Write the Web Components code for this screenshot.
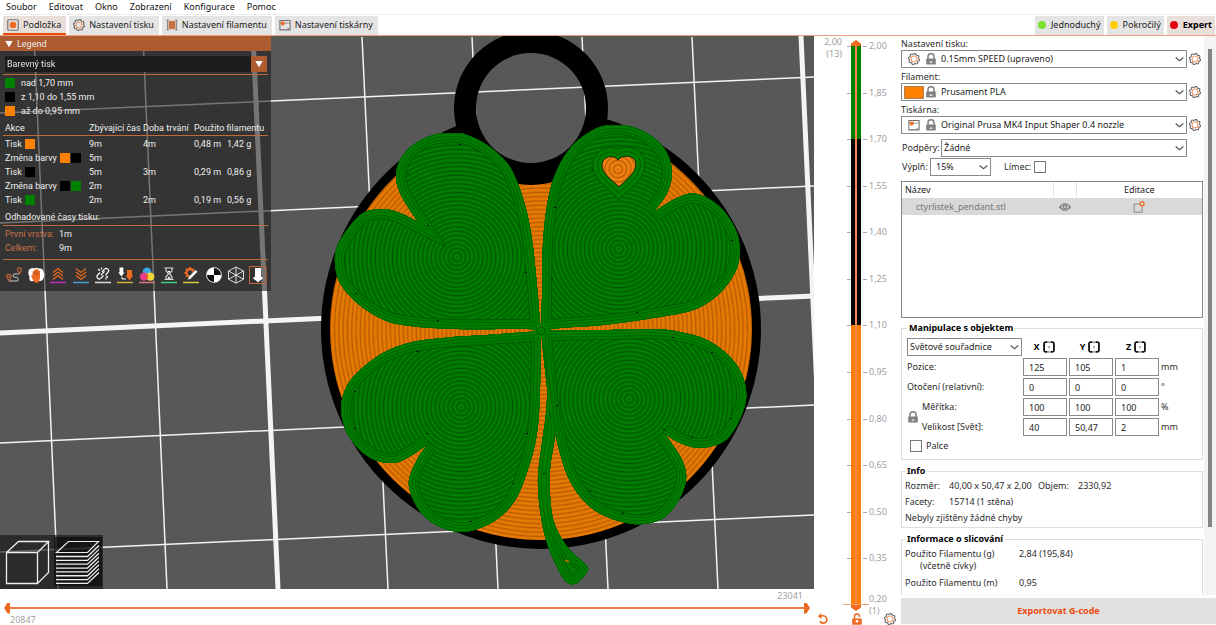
<!DOCTYPE html>
<html lang="cs">
<head>
<meta charset="utf-8">
<title>PrusaSlicer</title>
<style>
html, body { margin: 0; height: 100%; overflow: hidden; background: #fff; }
body { font-family: "Noto Sans", "Open Sans", sans-serif; font-size: 9px; line-height: 14px; color: #2b2b2b; }
</style>
</head>
<body>
<slicer-app></slicer-app>
<script>
const GEAR = (() => {
  let p = '';
  for (let i = 0; i < 32; i++) {
    const r = (i >> 1) % 2 ? 6.3 : 7.5, a = (i + .5) * Math.PI / 16;
    p += (i ? 'L' : 'M') + (8 + r * Math.cos(a)).toFixed(2) + ' ' + (8 + r * Math.sin(a)).toFixed(2);
  }
  return p + 'Z';
})();
const base = (color, body) => body + `<path d="M1 16.5H17" stroke="${color}" stroke-width="1.5"/>`;
const ICONS = {
  bed: [16, '<rect x="1" y="1" width="14" height="14" rx="1.5" fill="none" stroke="#777" stroke-width="1.6"/><circle cx="8" cy="8" r="4.4" fill="#ed6b21"/>'],
  gear: [16, `<path d="${GEAR}" fill="none" stroke="#6c6c6c" stroke-width="1.5"/><circle cx="8" cy="8" r="4" fill="none" stroke="#f09a6c" stroke-width="1.5"/>`],
  spool: [16, '<path d="M3.5 2.5h9v11h-9z" fill="#cf7647"/><path d="M4 5h8M4 8h8M4 11h8" stroke="#a86846" stroke-width=".8"/><path d="M2 1v14M14 1v14M0.8 1.5h3M12.2 1.5h3M.8 14.5h3M12.2 14.5h3" stroke="#888" stroke-width="1.5"/>'],
  printer: [16, '<path d="M1.2 2v12.5h13.6V2z" fill="none" stroke="#707070" stroke-width="1.4"/><path d="M1 5.6h14M11 12.4h3" stroke="#808080" stroke-width="1"/><path d="M2.4 3.6h5.2v3.2L5 9.2 2.4 6.8z" fill="#ed6b21"/>'],
  lock: [16, '<path d="M4 8V4.6a4 3.6 0 0 1 8 0V8" fill="none" stroke="#808080" stroke-width="2"/><rect x="1.6" y="7.4" width="12.8" height="8" rx="1" fill="#808080"/><path d="M6.2 12.2h3.6" stroke="#fff" stroke-width="1.6"/>'],
  unlock: [16, '<path d="M4.6 8V4.6a3.4 3.2 0 0 1 6.8 0V5.4" fill="none" stroke="#ed6b21" stroke-width="2"/><rect x="1.6" y="7.2" width="12.8" height="8.4" rx="1" fill="#ed6b21"/><circle cx="8" cy="11" r="1.8" fill="#fff"/>'],
  undo: [16, '<path d="M4 3.6h4.6a5 5 0 1 1-4.8 7.4" fill="none" stroke="#ed6b21" stroke-width="2.2"/><path d="M1 4.2 6 0v8z" fill="#ed6b21"/>'],
  chevron: [16, '<path d="M2.4 5.2 8 9.8l5.6-4.6" fill="none" stroke="#555" stroke-width="1.7"/>'],
  eye: [16, '<path d="M1 8Q8-1 15 8 8 17 1 8z" fill="none" stroke="#808080" stroke-width="1.9"/><circle cx="8" cy="8" r="2.3" fill="none" stroke="#808080" stroke-width="1.9"/>'],
  edit: [16, '<path d="M9 4H1.4v11h10.8V7.6" fill="none" stroke="#888" stroke-width="1.3"/><circle cx="12" cy="3.8" r="2.8" fill="none" stroke="#ed6b21" stroke-width="1.8"/>'],
  mirror: [16, '<path d="M6 1.6H3.4a2 2 0 0 0-2 2v8.800a2 2 0 0 0 2 2H6M10 1.6h2.6a2 2 0 0 1 2 2v8.800a2 2 0 0 1-2 2H10" fill="none" stroke="#111" stroke-width="2.4"/><path d="M8 0v3M8 6.6v3M8 13v3" stroke="#333" stroke-width="1"/>'],
  down: [16, '<path d="M2 3h12L8 13z" fill="#fff"/>'],
  travel: [18, '<path d="M4 15h8a2 2 0 0 0 0-3.6H9.5a1.8 1.8 0 0 1 0-3.4H14" fill="none" stroke="#999" stroke-width="1.4"/><path d="M4 14.6C1 11 1 8.400 4 8.400s3 2.600 0 6.200zM14.500 7.400c-2.600-3-2.600-5.600 0-5.600s2.600 2.600 0 5.600z" fill="none" stroke="#c0653a" stroke-width="1.2"/><circle cx="4" cy="10.800" r=".9" fill="#c0653a"/>'],
  wipe: [18, '<path d="M2 3.500q3-2.500 5-1 2-1.500 5 0 4-.5 4.500 3 1.500 3 .3 6-1 4-4.800 3.500H6.500Q1.500 16 2.500 11 .5 7 2 3.500z" fill="#fff"/><path d="M5.600 9V5.500l1.400-.3V4l1.600-.2.4-1 1.600.4.8 1 1.600.8V12l-1.500 4.500H7.400L4 10z" fill="#ed6b21"/><path d="M7.200 5.500V9M9 4.500V9M10.900 5V9" stroke="#9a4a20" stroke-width=".6"/>'],
  retract: [18, base('#c22bc2', '<path d="M4 6.500l5-4 5 4M4 10l5-4 5 4M4 13.500l5-4 5 4" fill="none" stroke="#ed6b21" stroke-width="1.200"/>')],
  deretract: [18, base('#3f9fd0', '<path d="M4 2.500l5 4 5-4M4 6l5 4 5-4M4 9.500l5 4 5-4" fill="none" stroke="#ed6b21" stroke-width="1.200"/>')],
  seam: [18, base('#ddd', '<path d="M8 6l2.500-2.800a2.300 2.300 0 0 1 3.400 3.200L11.500 9M9.500 9.500 7 12.200a2.300 2.300 0 0 1-3.400-3.200L6 6.500M4 3l2 1.800M7.500 1.500v2M12 13.500v-2M14 11.500l-2-1.600M6.800 9.200l3.800-3.800" fill="none" stroke="#fff" stroke-width="1.200"/>')],
  toolchange: [18, base('#d0b040', '<path d="M3.500 1.500h3.800v5h1.200L5.400 10.500 2.300 6.500h1.200z" fill="#fff"/><path d="M6 11v2h4" fill="none" stroke="#fff"/><path d="M11 4h5v5.500h1.200l-3.700 5-3.700-5H11z" fill="#ed6b21"/>')],
  colors: [18, base('#d87a7a', '<circle cx="9" cy="5.600" r="4.200" fill="#37a8e0"/><circle cx="6" cy="10.600" r="4.200" fill="#e83e8c"/><circle cx="12.200" cy="10.600" r="4.200" fill="#f4d73b"/><path d="M9 7.400a4.200 4.200 0 0 1 0 6 4.200 4.200 0 0 1 0-6z" fill="#ee5c30"/>')],
  pause: [18, base('#3fcf7f', '<path d="M4.500 2h9M4.500 13.500h9M6 2.500v2.300l2.500 3L6 10.800v2.400M12 2.500v2.300l-2.500 3 2.500 3v2.400" fill="none" stroke="#ddd" stroke-width="1.100"/><path d="M7 12.800h4l-2-2.500zM7.300 5h3.400L9 7z" fill="#fff"/>')],
  custom: [18, base('#d8c840', '<circle cx="8" cy="6.800" r="3.600" fill="none" stroke="#ed6b21" stroke-width="2.200"/><path d="M8 1v2M2.400 6.800h2M4 2.800l1.400 1.400M12 2.800l-1.400 1.400M4 10.800l1.400-1.400M13 6.800h1" stroke="#ed6b21" stroke-width="1.800"/><path d="M5.500 14l1-3 7-7.200 2.200 2-7.200 7.200z" fill="#fff" stroke="#333" stroke-width=".5"/>')],
  cog: [18, '<circle cx="9" cy="9" r="7.800" fill="#fff"/><path d="M9 9V2A7 7 0 0 1 16 9zM9 9v7A7 7 0 0 1 2 9z" fill="#111"/>'],
  shells: [18, '<path d="M9 1l7.500 4v8.200L9 17.200 1.500 13.200V5zM1.500 5 9 9.100 16.500 5M9 9.100v8M9 1v8.100L1.500 13.200M9 9.100l7.500 4.100" fill="none" stroke="#ddd" stroke-width="1"/>'],
  tool: [18, '<rect x=".5" y=".5" width="16.500" height="17" fill="none" stroke="#c0653a"/><path d="M6 2h6v9h1.500v2L11 14.500l-2 2-2-2L4.500 13v-2H6z" fill="#fff"/>'],
  cube: [48, '<path d="M4.500 14.500h31v31h-31zM4.500 14.500l12-11h30l-11 11M46.500 3.500V34.500L35.500 45.500" fill="none" stroke="#eee" stroke-width="1.300"/>'],
  layers: [48, '<path d="M2.500 14.500l12-11h30l-11 11z" fill="none" stroke="#eee" stroke-width="1.200"/><path d="' +
    Array.from({length: 8}, (_, i) => `M2 ${18.500 + i * 3.850}h31.500l11.500-11`).join('') + '" fill="none" stroke="#eee" stroke-width="1.300"/>'],
};

class Base extends HTMLElement {
  connectedCallback() {
    if (this.shadowRoot) return;
    this.attachShadow({ mode: 'open' }).innerHTML =
      `<style>*{box-sizing:border-box} button,input,select{font:inherit;color:inherit;margin:0} ${this.css()}</style>${this.html()}`;
  }
  css() { return ':host{display:block}'; }
  html() { return '<slot></slot>'; }
}

customElements.define('app-icon', class extends Base {
  css() { return ':host{display:inline-block;flex:none;width:12px;height:12px} svg{display:block;width:100%;height:100%}'; }
  html() {
    const [s, body] = ICONS[this.getAttribute('name')];
    return `<svg viewBox="0 0 ${s} ${s}" aria-hidden="true">${body}</svg>`;
  }
});

customElements.define('menu-bar', class extends Base {
  css() { return `:host{display:block;border-bottom:1px solid #eee}
    nav{display:flex;gap:12px;padding:0 6px;height:14px}
    button{border:0;background:none;padding:0;line-height:14px;white-space:nowrap;color:#111}`; }
  html() {
    return '<nav>' + ['Soubor', 'Editovat', 'Okno', 'Zobrazení', 'Konfigurace', 'Pomoc'].map(t => `<button>${t}</button>`).join('') + '</nav>';
  }
});

customElements.define('tab-button', class extends Base {
  css() { return `:host{display:block}
    button{display:flex;align-items:center;gap:4px;height:19px;padding:0 5px 0 4px;border:0;border-bottom:2px solid #e4e4e4;background:#e4e4e4;white-space:nowrap;color:#222}
    :host([active]) button{background:#e8dfdb;border-color:#ed4b0e}
    :host([mode]) button{border-color:transparent;padding:0 3px 0 2px}
    :host([mode][active]) button{font-weight:bold;color:#000}
    i{width:8px;height:8px;margin:0 1px;border-radius:50%;background:var(--dot)}`; }
  html() {
    const icon = this.getAttribute('icon');
    return `<button>${icon ? `<app-icon name="${icon}"></app-icon>` : '<i></i>'}<slot></slot></button>`;
  }
});

customElements.define('tab-strip', class extends Base {
  css() { return `:host{display:flex;justify-content:space-between;box-sizing:border-box;height:21px;padding:1px 1px 0 3px;border-bottom:1px solid #eda27c}
    div{display:flex;gap:3px}`; }
  html() { return `<div><tab-button icon="bed" active>Podložka</tab-button><tab-button icon="gear">Nastavení tisku</tab-button>
    <tab-button icon="spool">Nastavení filamentu</tab-button><tab-button icon="printer">Nastavení tiskárny</tab-button></div>
    <div><tab-button mode style="--dot:#7de02c">Jednoduchý</tab-button><tab-button mode style="--dot:#fc0">Pokročilý</tab-button>
    <tab-button mode active style="--dot:#e00010">Expert</tab-button></div>`; }
});

/* Smooth curve through the given points. */
function curve(pts) {
  let d = '';
  for (let i = 0; i < pts.length - 1; i++) {
    const a = pts[i - 1] || pts[i], b = pts[i], c = pts[i + 1], e = pts[i + 2] || c;
    d += `C${b[0] + (c[0] - a[0]) / 6} ${b[1] + (c[1] - a[1]) / 6} ${c[0] - (e[0] - b[0]) / 6} ${c[1] - (e[1] - b[1]) / 6} ${c[0]} ${c[1]}`;
  }
  return d;
}
/* Closed outline from smooth runs that meet in sharp corners. */
const outline = (...runs) => 'M' + runs[0][0].join(' ') + runs.map((r, i) => (i ? 'L' + r[0].join(' ') : '') + curve(r)).join('') + 'Z';

const LEAVES = [
  { c: [457, 257], d: outline(
    [[540,330],[539,310],[538,297],[533,247],[527,213],[518,184],[507,163],[487,145],[467,135],[453,133],[433,135],[413,145],[400,160],[396,177],[400,193],[408,207],[418,222]],
    [[418,222],[400,213],[383,209],[363,213],[347,230],[337,247],[335,263],[340,283],[357,303],[380,318],[403,325],[453,329],[520,329],[540,330]]) },
  { c: [619, 249], d: outline(
    [[541,331],[560,328],[603,325],[647,319],[690,311],[713,299],[730,281],[739,260],[737,233],[720,207],[697,194],[677,198],[654,212]],
    [[654,212],[667,193],[672,173],[667,153],[653,137],[633,127],[617,125],[597,128],[573,145],[557,170],[548,200],[543,243],[542,297],[541,331]]) },
  { c: [461, 407], d: outline(
    [[541,331],[487,335],[453,337],[413,342],[383,353],[357,373],[345,390],[341,410],[347,433],[360,450],[375,460],[393,463],[407,458],[427,445]],
    [[427,445],[417,460],[409,480],[412,497],[423,515],[440,527],[460,532],[480,528],[500,517],[517,497],[530,463],[537,433],[540,393],[541,331]]) },
  { c: [629, 399], d: outline(
    [[541,331],[603,330],[653,329],[680,332],[707,340],[730,357],[743,377],[746,400],[737,425],[723,442],[700,448],[680,443],[665,434]],
    [[665,434],[682,460],[686,480],[677,503],[660,520],[633,524],[603,515],[583,500],[568,477],[560,453],[555,433],[551,420],[547,387],[541,331]]) },
];
const STEM = outline(
  [[544,345],[547,387],[546,413],[542,443],[538,477],[540,510],[547,543],[560,573],[568,583],[577,583],[588,570],[583,562],[570,550],[557,530],[551,507],[550,470],[555,433],[552,400],[544,345]]);
const HEART = 'M618 160C614 154 602 156 602 165 602 174 612 180 619 187 626 180 636 173 636 164 636 155 622 154 618 160Z';

customElements.define('plate-scene', class extends Base {
  css() { return ':host{display:block} svg{display:block;width:100%;height:100%}'; }
  html() {
    const rings = (id, [x, y], lo, hi) => `<radialGradient id="${id}" gradientUnits="userSpaceOnUse" cx="${x}" cy="${y}" r="4.300" spreadMethod="repeat">
      <stop offset="0" stop-color="${lo}"/><stop offset=".35" stop-color="${hi}"/><stop offset=".7" stop-color="${hi}"/><stop offset="1" stop-color="${lo}"/></radialGradient>`;
    const walls = [[20, '#005a00'], [18, '#007a00'], [14, '#006400'], [12, '#007e00'], [8, '#006600'], [6, '#007e00'], [2, '#006800']];
    const shell = (id, d, fill) => `<clipPath id="c${id}"><path d="${d}"/></clipPath><g clip-path="url(#c${id})"><path d="${d}" fill="${fill}"/>` +
      walls.map(([w, c]) => `<path d="${d}" fill="none" stroke="${c}" stroke-width="${w}"/>`).join('') + '</g>';
    const thin = [[34,37,58,589],[143,37,167,589],[362,37,388,589],[472,37,498,589],[582,37,608,589],[692,37,718,589],
      [0,113,814,77],[0,223,814,186],[0,443,814,405],[0,552,814,515]];
    const thick = [[253,36,278,589],[801,36,826,589],[0,333,814,296]];
    const line = (l, w) => `<path d="M${l[0]} ${l[1]}L${l[2]} ${l[3]}" stroke="#f4f4f4" stroke-width="${w}"/>`;
    const specks = [[459,144],[407,173],[427,225],[525,272],[355,293],[437,320],[591,169],[554,207],[551,278],[731,240],[636,312],[354,391],[354,428],[426,433],[526,433],[512,483],[470,521],[556,405],[672,337],[711,352],[543,473],[663,429],[691,437],[730,418],[589,491],[416,351],[622,513]];
    return `<svg viewBox="0 36 814 553" preserveAspectRatio="xMidYMid slice" role="img" aria-label="Náhled">
      <defs>${rings('o', [541, 330], '#b85e00', '#e67804')}${rings('h', [618, 169], '#b85e08', '#f08010')}
      ${LEAVES.map((l, i) => rings('g' + i, l.c, '#005a00', '#007e00')).join('')}
      <mask id="hole" maskUnits="userSpaceOnUse" x="0" y="0" width="814" height="600"><path d="M0 0H814V600H0z" fill="#fff"/><circle cx="531" cy="108" r="55" fill="#000"/></mask></defs>
      <path d="M0 36H814V589H0z" fill="#585858"/>
      ${thin.map(l => line(l, 1.500)).join('')}${thick.map(l => line(l, 5)).join('')}
      <g mask="url(#hole)"><circle cx="541" cy="329" r="220"/><circle cx="541" cy="329" r="211" fill="url(#o)"/><circle cx="531" cy="108" r="77"/></g>
      ${LEAVES.map((l, i) => shell(i, l.d, `url(#g${i})`)).join('')}
      ${shell('s', STEM, '#007e00')}
      <path d="${HEART}" fill="none" stroke="#005a00" stroke-width="19"/><path d="${HEART}" fill="none" stroke="#007e00" stroke-width="17"/>
      <path d="${HEART}" fill="none" stroke="#006000" stroke-width="10"/><path d="${HEART}" fill="none" stroke="#007e00" stroke-width="8"/>
      <path d="${HEART}" fill="url(#h)" stroke="#0a2a00" stroke-width="1"/>
      <path d="M534 330H548M541 323V338" stroke="#007e00" stroke-width="8"/><circle cx="541" cy="331" r="4" fill="none" stroke="#005800"/>
      ${specks.map(([x, y]) => `<path d="M${x} ${y}h2v1h-2z" fill="#011"/>`).join('')}
      <path d="M565 560l4 2" stroke="#c07000" stroke-width="1.500"/></svg>`;
  }
});

customElements.define('legend-panel', class extends Base {
  css() { return `:host{display:block;width:271px;background:rgba(26,26,26,.58);color:#eee;font-family:Roboto,"Noto Sans",sans-serif;font-size:9px;line-height:14px}
    header{display:flex;align-items:center;gap:3px;height:15px;padding-left:4px;background:#ad5b30}
    header app-icon{width:10px;height:10px}
    .in{padding:5px 3px 6px}
    .combo{position:relative;margin:0 1px 2px 2px;height:16px}
    select{appearance:none;width:100%;height:16px;border:0;padding:0 18px 0 2px;background:#1c1c1c;opacity:.95;display:block}
    .combo app-icon{position:absolute;right:0;top:0;width:16px;height:16px;background:#ad5b30;padding:3px;pointer-events:none;box-sizing:border-box}
    ul{list-style:none;margin:0;padding:1px 2px 3px;border-top:1px solid #c0693d}
    li{display:flex;align-items:center;gap:6px;height:14px}
    i{display:inline-block;width:10px;height:10px;flex:none;background:var(--c)}
    table{width:100%;border-collapse:collapse;table-layout:fixed}
    th,td{padding:0;font-weight:normal;text-align:left;height:14px;line-height:14px;white-space:nowrap}
    thead tr{border-bottom:1px solid #c0693d}
    tbody::before{content:"";display:block;height:1px}
    td:first-child,th:first-child{padding-left:2px}
    td span{display:flex;align-items:center;gap:3px}
    td span i + i{margin-left:-2px}
    p{margin:0;padding:3px 2px 1px;border-bottom:1px solid #c0693d}
    dl{display:grid;grid-template-columns:54px 1fr;margin:0;padding:1px 2px 4px;border-bottom:1px solid #c0693d}
    dt{color:#c87145} dd{margin:0}
    .bar{display:flex;justify-content:space-between;padding:6px 1px 0 2px;height:25px}
    .bar button{border:0;padding:0;background:none;width:18px;height:18px}
    .bar app-icon{width:18px;height:18px}`; }
  html() {
    const O = '#ff8000', K = '#000', G = '#008000', sw = a => a.map(c => `<i style="--c:${c}"></i>`).join('');
    const rows = [['Tisk',[O],'9m','4m','0,48 m','1,42 g'],['Změna barvy',[O,K],'5m','','',''],['Tisk',[K],'5m','3m','0,29 m','0,86 g'],
      ['Změna barvy',[K,G],'2m','','',''],['Tisk',[G],'2m','2m','0,19 m','0,56 g']];
    return `<header><app-icon name="down"></app-icon>Legend</header><div class="in">
      <div class="combo"><select aria-label="Zobrazení"><option>Barevný tisk</option></select><app-icon name="down"></app-icon></div>
      <ul><li>${sw([G])}nad 1,70 mm</li><li>${sw([K])}z 1,10 do 1,55 mm</li><li>${sw([O])}až do 0,95 mm</li></ul>
      <table><colgroup><col style="width:86px"><col style="width:54px"><col style="width:51px"><col style="width:33px"><col></colgroup>
      <thead><tr><th>Akce</th><th>Zbývající čas</th><th>Doba trvání</th><th colspan="2">Použito filamentu</th></tr></thead>
      <tbody>${rows.map(r => `<tr><td><span>${r[0]} ${sw(r[1])}</span></td>${r.slice(2).map(v => `<td>${v}</td>`).join('')}</tr>`).join('')}</tbody></table>
      <p>Odhadované časy tisku:</p>
      <dl><dt>První vrstva:</dt><dd>1m</dd><dt>Celkem:</dt><dd>9m</dd></dl>
      <div class="bar">${['travel','wipe','retract','deretract','seam','toolchange','colors','pause','custom','cog','shells','tool'].map(n => `<button aria-label="${n}"><app-icon name="${n}"></app-icon></button>`).join('')}</div></div>`;
  }
});

customElements.define('view-switch', class extends Base {
  css() { return `:host{display:flex;gap:4px;width:103px;box-sizing:border-box;padding:2px 1px 3px 2px;background:rgba(20,20,20,.66)}
    button{border:0;padding:0;background:none;flex:1;height:49px}
    button + button{background:rgba(0,0,0,.5)} app-icon{display:block;width:48px;height:48px}`; }
  html() { return '<button aria-label="3D editor"><app-icon name="cube"></app-icon></button><button aria-label="Náhled"><app-icon name="layers"></app-icon></button>'; }
});

customElements.define('move-slider', class extends Base {
  css() { return `:host{display:flex;flex-direction:column;box-sizing:border-box;height:36px;padding:0 4px;color:#a0a0a0}
    span{height:13px;line-height:13px} .hi{align-self:flex-end;margin-right:7px} .lo{margin:0 0 0 6px;height:11px;line-height:11px}
    .t{position:relative;flex:none;height:12px;background:linear-gradient(#ed7d42,#ed7d42) 6px 5px/calc(100% - 12px) 2px no-repeat}
    input{appearance:none;position:absolute;inset:0;width:100%;height:12px;background:none;pointer-events:none}
    input::-webkit-slider-thumb{appearance:none;width:6px;height:11px;background:#ed6b21;pointer-events:auto;clip-path:polygon(0 50%,60% 0,100% 0,100% 100%,60% 100%)}
    input + input::-webkit-slider-thumb{clip-path:polygon(100% 50%,40% 0,0 0,0 100%,40% 100%)}`; }
  html() { return `<span class="hi">23041</span><div class="t"><input type="range" min="20847" max="23041" value="20847" aria-label="Od">
    <input type="range" min="20847" max="23041" value="23041" aria-label="Do"></div><span class="lo">20847</span>`; }
});

customElements.define('layer-slider', class extends Base {
  css() { return `:host{display:flex;flex-direction:column;color:#a0a0a0;line-height:12px}
    .m{flex:1;display:grid;grid-template-columns:28px 23px 1fr;column-gap:2px;min-height:0;padding-top:4px}
    .l{text-align:right;margin-top:-4px}
    .t{position:relative;margin:0 6px 0 7px;display:flex}
    .b{flex:1;display:flex;align-items:end;margin:6px 0 8px;background:linear-gradient(90deg,transparent 4px,#f4884b 4px 6px,transparent 6px),linear-gradient(#008000 16.600%,#000 16.600% 50%,#ff8000 50%)}
    .b::after{content:"";flex:1;height:1px;background:#f4a070;box-shadow:8px 0 #f4a070,-8px 0 #f4a070}
    .t input{appearance:none;position:absolute;inset:0 0 2px;height:auto;width:100%;writing-mode:vertical-lr;background:none;pointer-events:none}
    .t input::-webkit-slider-thumb{appearance:none;width:10px;height:6px;background:#ed6b21;pointer-events:auto;clip-path:polygon(50% 0,100% 60%,100% 100%,0 100%,0 60%)}
    .t input + input::-webkit-slider-thumb{clip-path:polygon(50% 100%,100% 40%,100% 0,0 0,0 40%)}
    .s{display:flex;flex-direction:column}
    .s div{flex:1;display:flex;align-items:flex-start;gap:2px}
    .s div::before{content:"";width:4px;height:1px;margin:6px 0 0 -6px;background:#aaa;box-shadow:-16px 0 #aaa}
    .s p{flex:none;margin:-6px 0 0;height:20px}
    .f{display:flex;height:12px;padding:0 5px 0 3px;justify-content:space-between}
    .f button{border:0;background:none;padding:0;height:12px}`; }
  html() {
    const v = ['2,00','1,85','1,70','1,55','1,40','1,25','1,10','0,95','0,80','0,65','0,50','0,35'];
    return `<div class="m"><div class="l">2,00<br>(13)</div>
      <div class="t"><div class="b"></div><input type="range" min="0" max="100" value="0" aria-label="Horní vrstva"><input type="range" min="0" max="100" value="100" aria-label="Dolní vrstva"></div>
      <div class="s">${v.map(x => `<div>${x}</div>`).join('')}<p>0,20<br>(1)</p></div></div>
      <div class="f"><button aria-label="Zpět"><app-icon name="undo"></app-icon></button><button aria-label="Zamknout"><app-icon name="unlock"></app-icon></button><button aria-label="Nastavení"><app-icon name="gear"></app-icon></button></div>`;
  }
});

customElements.define('combo-box', class extends Base {
  css() { return `:host{display:block;position:relative;height:18px;min-width:0}
    select{appearance:none;display:block;width:100%;height:18px;border:1px solid #8a8a8a;border-radius:0;background:#fff;padding:0 16px 0 var(--pad,2px);line-height:14px;color:#222}
    .c{position:absolute;right:2px;top:4px;width:11px;height:11px;pointer-events:none}
    .i{position:absolute;left:3px;top:2px;display:flex;align-items:center;pointer-events:none;gap:1px;height:14px}
    .w{width:20px;display:flex;justify-content:center} .w b{width:20px;height:13px;background:#ff8000;border:1px solid #b08050}`; }
  html() {
    const ic = this.getAttribute('icon');
    return `<select aria-label="${this.getAttribute('label')}"><option>${this.getAttribute('value')}</option></select><app-icon class="c" name="chevron"></app-icon>` +
      (ic ? `<div class="i"><div class="w">${ic === 'swatch' ? '<b></b>' : `<app-icon name="${ic}"></app-icon>`}</div><app-icon name="lock"></app-icon></div>` : '');
  }
});

customElements.define('group-box', class extends Base {
  css() { return `:host{display:block} fieldset{margin:0;min-width:0;border:1px solid #dedede;padding:0 5px;height:100%}
    legend{font-weight:bold;color:#000;padding:0 2px;margin-left:var(--lx,-2px);line-height:14px;height:14px}`; }
  html() { return `<fieldset><legend>${this.getAttribute('label')}</legend><slot></slot></fieldset>`; }
});

customElements.define('object-list', class extends Base {
  css() { return `:host{display:block;box-sizing:border-box;border:1px solid #8a8a8a;height:137px;background:#fff}
    table{width:100%;border-collapse:collapse;table-layout:fixed}
    th,td{padding:0;height:16px;line-height:16px;font-weight:normal;text-align:center;color:#222}
    th + th{border-left:1px solid #e4e4e4}
    th:first-child{text-align:left;padding-left:3px} td:first-child{text-align:left;padding-left:14px}
    tbody tr{background:#d9d9d9} td{color:#777;height:17px} app-icon{display:block;margin:auto}`; }
  html() { return `<table><colgroup><col><col style="width:23px"><col style="width:126px"></colgroup>
    <thead><tr><th>Název</th><th></th><th>Editace</th></tr></thead>
    <tbody><tr><td>ctyrlistek_pendant.stl</td><td><app-icon name="eye"></app-icon></td><td><app-icon name="edit"></app-icon></td></tr></tbody></table>`; }
});

customElements.define('side-panel', class extends Base {
  css() { return `:host{display:flex;flex-direction:column;min-height:0}
    .scroll{flex:1;min-height:0;overflow:hidden;display:grid;grid-template:minmax(0,1fr)/minmax(0,1fr) 12px}
    .body{padding:1px 1px 0 0;min-width:0;overflow:hidden} .track{background:#f3f3f3;padding:13px 4px 68px;display:flex}
    .track div{flex:1;background:#858585}
    label{display:block;white-space:nowrap}
    .preset{display:grid;grid-template-columns:1fr 12px;column-gap:2px;align-items:center;padding:0 2px 2px 0}
    .preset label{grid-column:1/-1;height:13px;line-height:13px} .preset combo-box{--pad:39px}
    .gearbtn{border:0;padding:0;background:none;width:12px;height:12px}
    .row{display:flex;align-items:center} .sup{padding:3px 16px 0 1px} .sup label{width:39px} .sup combo-box{flex:1}
    .fill{padding:1px 0 5px 1px} .fill label{width:28px} .fill combo-box{width:61px;--pad:5px} .fill .b{margin-left:13px;width:30px}
    input[type=checkbox]{appearance:none;width:12px;height:12px;border:1px solid #777;background:#fff;border-radius:0}
    object-list{margin-bottom:3px}
    .manip{height:139px;--lx:0px}
    table{border-collapse:collapse;margin-top:2px} td,th{padding:0;height:20px;text-align:left;font-weight:normal;white-space:nowrap}
    th.ax{font-weight:bold;color:#000;width:46px;text-align:center} th.ax span{display:inline-flex;gap:3px;align-items:center;margin-right:4px}
    td input{display:block;width:44px;height:18px;border:1px solid #8a8a8a;padding:0 0 0 5px;background:#fff;color:#222}
    td.k{width:116px} .ind{padding-left:15px} .coord{width:115px}
    .lockcell{position:relative} .lockcell app-icon{position:absolute;left:0;top:14px}
    .palce{display:flex;align-items:center;gap:4px;padding:2px 0 0 3px}
    .info{height:64px;margin-top:4px} .info p{margin:0 0 0 -2px;height:16px;line-height:16px;display:flex;white-space:nowrap}
    .info .k{width:44px}.info .v{width:89px}.info .q{width:40px}
    .slice{margin-top:4px;height:90px} dl{margin:2px 0 0 -2px;display:grid;grid-template-columns:114px 1fr;line-height:12px;row-gap:5px} dd{margin:0} dt small{display:block;font-size:inherit;padding-left:15px}
    .export{border:0;height:26px;background:#e1e1e1;color:#ed4b0e;font-weight:bold;margin:3px 0 1px}`; }
  html() {
    const preset = (id, l, v, i) => `<div class="preset"><label>${l}:</label><combo-box label="${l}" value="${v}" icon="${i}"></combo-box><button class="gearbtn" aria-label="Upravit"><app-icon name="gear"></app-icon></button></div>`;
    const row = (l, vals, u, cls = '') => `<tr><td class="k ${cls}">${l}</td>${vals.map((v, i) => `<td><input value="${v}" aria-label="${'XYZ'[i]}"></td>`).join('')}<td>${u}</td></tr>`;
    return `<div class="scroll"><div class="body">
      ${preset('p', 'Nastavení tisku', '0.15mm SPEED (upraveno)', 'gear')}${preset('f', 'Filament', 'Prusament PLA', 'swatch')}${preset('t', 'Tiskárna', 'Original Prusa MK4 Input Shaper 0.4 nozzle', 'printer')}
      <div class="row sup"><label>Podpěry:</label><combo-box label="Podpěry" value="Žádné"></combo-box></div>
      <div class="row fill"><label>Výplň:</label><combo-box label="Výplň" value="15%"></combo-box><label class="b" for="brim">Límec:</label><input type="checkbox" id="brim"></div>
      <object-list></object-list>
      <group-box class="manip" label="Manipulace s objektem"><table>
        <tr><th><combo-box class="coord" label="Souřadnice" value="Světové souřadnice"></combo-box></th>${[...'XYZ'].map(a => `<th class="ax"><span>${a}<app-icon name="mirror"></app-icon></span></th>`).join('')}<th></th></tr>
        ${row('Pozice:', ['125', '105', '1'], 'mm')}${row('Otočení (relativní):', ['0', '0', '0'], '°')}
        ${row('<app-icon name="lock"></app-icon>Měřítka:', ['100', '100', '100'], '%', 'ind lockcell')}${row('Velikost [Svět]:', ['40', '50,47', '2'], 'mm', 'ind')}</table>
        <div class="palce"><input type="checkbox" id="inch"><label for="inch">Palce</label></div></group-box>
      <group-box class="info" label="Info"><p><span class="k">Rozměr:</span><span class="v">40,00 x 50,47 x 2,00</span><span class="q">Objem:</span><span>2330,92</span></p>
        <p><span class="k">Facety:</span><span>15714 (1 stěna)</span></p><p>Nebyly zjištěny žádné chyby</p></group-box>
      <group-box class="slice" label="Informace o slicování"><dl><dt>Použito Filamentu (g)<small>(včetně cívky)</small></dt><dd>2,84 (195,84)</dd><dt>Použito Filamentu (m)</dt><dd>0,95</dd></dl></group-box>
      </div><div class="track"><div></div></div></div><button class="export">Exportovat G-code</button>`;
  }
});

customElements.define('slicer-app', class extends Base {
  css() { return `:host{display:flex;flex-direction:column;height:100vh}
    main{flex:1;min-height:0;display:grid;grid-template-columns:minmax(0,1fr) 87px 315px}
    .left{display:flex;flex-direction:column;min-height:0}
    .canvas{position:relative;flex:1;min-height:0} plate-scene{height:100%}
    legend-panel{position:absolute;left:0;top:0} view-switch{position:absolute;left:0;bottom:0}`; }
  html() { return `<menu-bar></menu-bar><tab-strip></tab-strip><main><div class="left"><div class="canvas"><plate-scene></plate-scene><legend-panel></legend-panel><view-switch></view-switch></div>
    <move-slider></move-slider></div><layer-slider></layer-slider><side-panel></side-panel></main>`; }
});
</script>
</body>
</html>
